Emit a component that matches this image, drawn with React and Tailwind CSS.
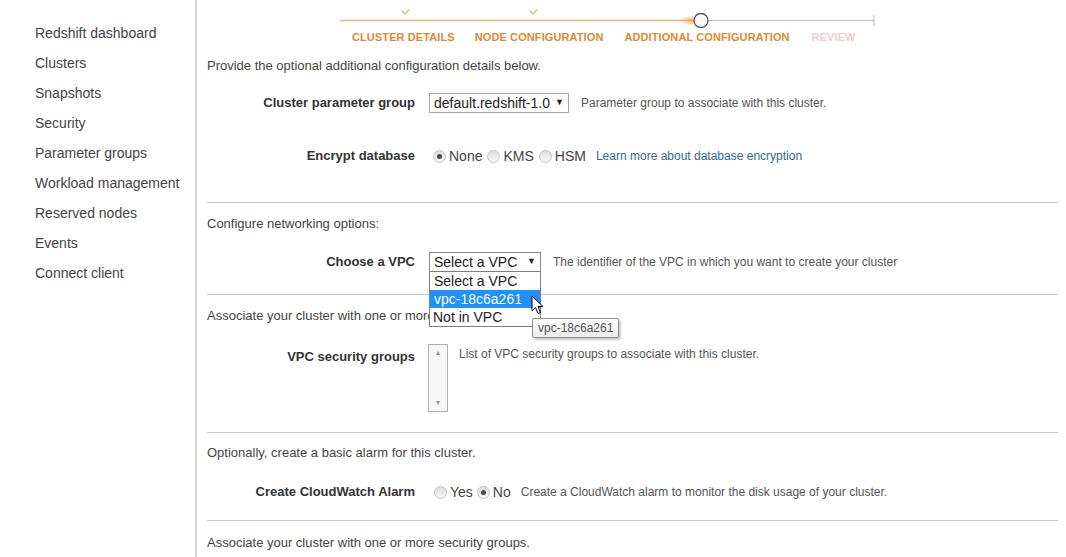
import React from "react";

const nav = [
  "Redshift dashboard",
  "Clusters",
  "Snapshots",
  "Security",
  "Parameter groups",
  "Workload management",
  "Reserved nodes",
  "Events",
  "Connect client",
];

function Radio({ checked, label }) {
  return (
    <span className="flex items-center gap-[3px]">
      <span className="w-[13px] h-[13px] rounded-full border border-[#c4c4c4] bg-gradient-to-b from-[#dedede] to-[#f8f8f8] flex items-center justify-center">
        {checked && <span className="w-[5px] h-[5px] rounded-full bg-[#4a4a4a]" />}
      </span>
      <span className="text-[14px] text-[#444]">{label}</span>
    </span>
  );
}

function Row({ label, children, className = "" }) {
  return (
    <div className={`flex items-center ${className}`}>
      <div className="w-[208px] text-right text-[13px] font-bold text-[#333]">{label}</div>
      <div className="ml-[14px] flex items-center">{children}</div>
    </div>
  );
}

function Stepper() {
  return (
    <div className="ml-[133px] w-[540px] h-[48px]">
      <svg width="540" height="28" className="block">
        <defs>
          <radialGradient id="glow" cx="0.5" cy="0.5" r="0.5">
            <stop offset="0" stopColor="#f4a75a" stopOpacity="0.9" />
            <stop offset="1" stopColor="#f4a75a" stopOpacity="0" />
          </radialGradient>
        </defs>
        <line x1="0" y1="20.5" x2="354" y2="20.5" stroke="#e5b380" strokeWidth="1.3" />
        <line x1="354" y1="20.5" x2="534" y2="20.5" stroke="#bdbdbd" strokeWidth="1" />
        <line x1="534" y1="15" x2="534" y2="26" stroke="#bdbdbd" strokeWidth="1" />
        <ellipse cx="352" cy="20.5" rx="14" ry="5" fill="url(#glow)" />
        <circle cx="361" cy="20.5" r="7" fill="#fff" stroke="#555" strokeWidth="1.3" />
        <path d="M62 10.5 L65 14 L69 9.5" fill="none" stroke="#e8b27a" strokeWidth="1.4" />
        <path d="M190 10.5 L193 14 L197 9.5" fill="none" stroke="#e8b27a" strokeWidth="1.4" />
      </svg>
      <div className="flex items-center h-[18px] pl-[12px] text-[11px] font-bold text-[#dd8a34] tracking-[0.1px]">
        <span>CLUSTER DETAILS</span>
        <span className="ml-[20px]">NODE CONFIGURATION</span>
        <span className="ml-[21px]">ADDITIONAL CONFIGURATION</span>
        <span className="ml-[22px] text-[#f1cdcd]">REVIEW</span>
      </div>
    </div>
  );
}

export default function App() {
  return (
    <div className="flex h-[557px] w-[1066px] bg-white overflow-hidden" style={{ fontFamily: '"Liberation Sans", Arial, sans-serif' }}>
      <aside className="w-[197px] shrink-0 border-r-2 border-[#d6d6d6] pt-[18px] pl-[35px]">
        {nav.map((item) => (
          <div key={item} className="h-[30px] leading-[30px] text-[14px] text-[#444]">
            {item}
          </div>
        ))}
      </aside>

      <main className="flex-1 pl-[10px] pr-[8px] text-[#444]">
        <Stepper />

        <p className="mt-[9px] h-[18px] leading-[18px] text-[13px]">
          Provide the optional additional configuration details below.
        </p>

        <Row label="Cluster parameter group" className="mt-[18px] h-[20px]">
          <div className="w-[140px] h-[20px] border border-[#a6a6a6] bg-white flex items-center justify-between px-[4px] text-[14px] text-[#222]">
            <span>default.redshift-1.0</span>
            <span className="text-[9px]">▼</span>
          </div>
          <span className="ml-[12px] text-[12px] text-[#555]">Parameter group to associate with this cluster.</span>
        </Row>

        <Row label="Encrypt database" className="mt-[33px] h-[20px]">
          <div className="flex items-center gap-[5px] ml-[4px]">
            <Radio checked label="None" />
            <Radio label="KMS" />
            <Radio label="HSM" />
          </div>
          <a className="ml-[10px] text-[12px] text-[#2c6aa3]">Learn more about database encryption</a>
        </Row>

        <hr className="mt-[36px] border-t border-[#c8c8c8]" />

        <p className="mt-[12px] h-[18px] leading-[18px] text-[13px]">Configure networking options:</p>

        <Row label="Choose a VPC" className="mt-[19px] h-[20px] relative z-10">
          <div className="relative">
            <div className="w-[112px] h-[20px] border border-[#8a8a8a] bg-white flex items-center justify-between px-[4px] text-[14px] text-[#222]">
              <span>Select a VPC</span>
              <span className="text-[9px] text-[#222]">▼</span>
            </div>
            <div className="absolute left-0 top-[19px] w-[112px] border border-[#7f7f7f] bg-white text-[14px] text-[#222]">
              <div className="h-[18px] leading-[18px] px-[4px]">Select a VPC</div>
              <div className="h-[18px] leading-[18px] px-[4px] bg-[#1e90ff] text-white">vpc-18c6a261</div>
              <div className="h-[18px] leading-[18px] px-[3px]">Not in VPC</div>
            </div>
            <svg className="absolute left-[102px] top-[43px]" width="14" height="20" viewBox="0 0 14 20">
              <path d="M1 1 L1 16 L4.5 12.5 L7 18.5 L9.5 17.5 L7 11.5 L12 11.5 Z" fill="#fff" stroke="#000" strokeWidth="1" strokeLinejoin="round" />
            </svg>
            <div className="absolute left-[103px] top-[66px] h-[20px] px-[5px] flex items-center border border-[#8c8c8c] rounded-[2px] bg-gradient-to-b from-[#fdfdfd] to-[#ececec] text-[12px] text-[#555] whitespace-nowrap shadow-[2px_2px_2px_rgba(0,0,0,0.2)]">
              vpc-18c6a261
            </div>
          </div>
          <span className="ml-[12px] text-[12px] text-[#555]">The identifier of the VPC in which you want to create your cluster</span>
        </Row>

        <hr className="mt-[22px] border-t border-[#c8c8c8]" />

        <p className="mt-[12px] h-[18px] leading-[18px] text-[13px]">Associate your cluster with one or more security groups.</p>

        <div className="flex mt-[19px]">
          <div className="w-[208px] text-right text-[13px] font-bold text-[#333] mt-[3px]">VPC security groups</div>
          <div className="ml-[13px] w-[20px] h-[68px] border border-[#b0b0b0] bg-[#f7f7f7] flex flex-col justify-between items-center py-[3px] text-[7px] text-[#999]">
            <span>▲</span>
            <span>▼</span>
          </div>
          <span className="ml-[11px] text-[12px] text-[#555] mt-[1px]">List of VPC security groups to associate with this cluster.</span>
        </div>

        <hr className="mt-[20px] border-t border-[#c8c8c8]" />

        <p className="mt-[11px] h-[18px] leading-[18px] text-[13px]">Optionally, create a basic alarm for this cluster.</p>

        <Row label="Create CloudWatch Alarm" className="mt-[20px] h-[20px]">
          <div className="flex items-center gap-[4px] ml-[5px]">
            <Radio label="Yes" />
            <Radio checked label="No" />
          </div>
          <span className="ml-[10px] text-[12px] text-[#555]">Create a CloudWatch alarm to monitor the disk usage of your cluster.</span>
        </Row>

        <hr className="mt-[18px] border-t border-[#c8c8c8]" />

        <p className="mt-[13px] h-[18px] leading-[18px] text-[13px]">Associate your cluster with one or more security groups.</p>
      </main>
    </div>
  );
}
